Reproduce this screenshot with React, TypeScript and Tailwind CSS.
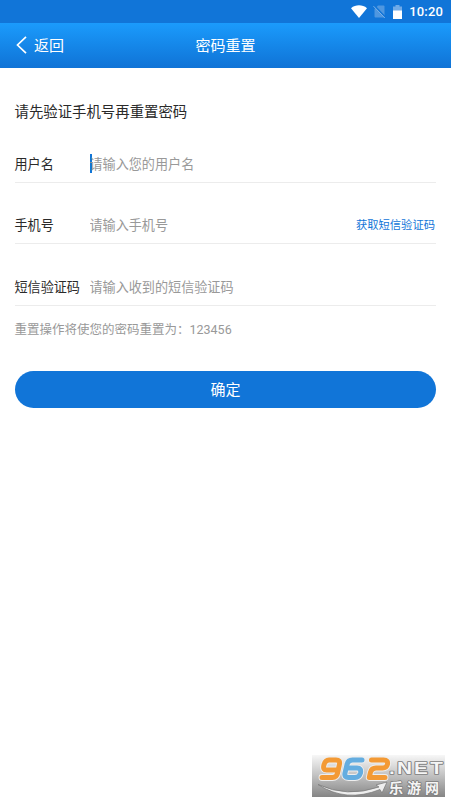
import React, { useState } from "react";

const fields = [
  { id: "username", label: "用户名", placeholder: "请输入您的用户名" },
  { id: "phone", label: "手机号", placeholder: "请输入手机号", action: "获取短信验证码" },
  { id: "code", label: "短信验证码", placeholder: "请输入收到的短信验证码" },
];

function StatusBar() {
  return (
    <div className="flex h-[23px] items-center justify-end bg-[#1175d8] pr-[8px] text-white">
      <svg className="h-[13px] w-[16px]" viewBox="0 0 16 13" fill="currentColor">
        <path d="M0 3.2C4.6-.6 11.4-.6 16 3.2L8 13Z" />
      </svg>
      <svg className="ml-[6px] h-[13px] w-[13px]" viewBox="0 0 13 13">
        <path d="M5 0.5H10.5Q11.5 .5 11.5 1.5V12.5H2.5Q1.5 12.5 1.5 11.5V4Z" fill="#4f97e0" />
        <path d="M1.2 .8L12.5 12.6" stroke="#1175d8" strokeWidth="2" />
        <path d="M.5 1.2L11.8 13" stroke="#7fb3e8" strokeWidth="1" />
      </svg>
      <svg className="ml-[7px] h-[14px] w-[9px]" viewBox="0 0 9 14">
        <path d="M2.5 0H6.5V1.5H9V14H0V1.5H2.5Z" fill="#70aae7" />
        <path d="M0 5.5H9V14H0Z" fill="#fff" />
      </svg>
      <span className="ml-[7px] font-['Roboto'] text-[13px] leading-none font-medium tracking-[0.15px]">10:20</span>
    </div>
  );
}

const digits = [
  { color: "#f39a35", d: "M25.5 15H14.5Q10.8 15 11.8 10.5Q13 5 17 5H24Q28.5 5 27.4 9.5L25.6 18Q24.6 22.5 20.5 22.5H10" },
  { color: "#64ade0", d: "M50 5H40.5Q36 5 35 9.5L33 18Q32 22.5 36.5 22.5H43Q47.4 22.5 48.5 18Q49.5 13 45 13H35" },
  { color: "#f39a35", d: "M59.5 5H71.5Q76.5 5 75.4 9.5Q74.6 13 70.5 13H64Q59.5 13 58.4 17.5L57.3 22.5H73" },
];

function SiteBadge() {
  return (
    <svg className="absolute top-[755px] left-[312px] h-[42px] w-[133px]" viewBox="0 0 133 42">
      <defs>
        <linearGradient id="badge" x1="0" y1="0" x2="0" y2="1">
          <stop offset="0" stopColor="#f7f7f7" />
          <stop offset=".45" stopColor="#c6c6c6" />
          <stop offset="1" stopColor="#858585" />
        </linearGradient>
      </defs>
      <rect width="133" height="42" fill="url(#badge)" />
      {digits.map((digit) => (
        <g key={digit.d} fill="none" strokeLinejoin="round" strokeLinecap="round">
          <path d={digit.d} stroke="#eee" strokeWidth="6.8" />
          <path d={digit.d} stroke={digit.color} strokeWidth="5" />
        </g>
      ))}
      <path d="M6 29.5Q35 43 67 32L64 30L75 27L70 38L68 34.5Q34 48 6 29.5Z" fill="#eee" stroke="#777" strokeWidth=".7" />
      <g fill="#f5f5f5" stroke="#7d7d7d" strokeWidth="1.6" paintOrder="stroke" strokeLinejoin="round">
        <text transform="translate(77 19) scale(1.22 1)" letterSpacing="1.8" fontFamily="Liberation Sans, sans-serif" fontSize="17" fontWeight="700">.NET</text>
        <text x="77" y="37.5" textLength="50" fontFamily="Noto Sans CJK SC, sans-serif" fontSize="14" fontWeight="700">乐游网</text>
      </g>
    </svg>
  );
}

export default function App() {
  const [values, setValues] = useState<Record<string, string>>({});

  return (
    <div className="relative h-[803px] w-[451px] overflow-hidden bg-white font-['Roboto','Noto_Sans_CJK_SC',sans-serif] text-[#333]">
      <StatusBar />

      {/* Header */}
      <header className="grid h-[45px] grid-cols-3 items-center bg-linear-to-b from-[#1b9bfc] to-[#1073d6] text-[15px] text-white">
        <button className="flex items-center pt-px pl-[16px]">
          <svg className="-mt-[2px] h-[18px] w-[11px]" viewBox="0 0 11 18" fill="none" stroke="currentColor" strokeWidth="1.7">
            <path d="M10 .8L1.5 9L10 17.2" />
          </svg>
          <span className="ml-[7px]">返回</span>
        </button>
        <h1 className="pt-px text-center">密码重置</h1>
      </header>

      <main className="pt-[33px] pr-[15px] pl-[14.5px]">
        <h2 className="h-[24px] text-[14.4px] leading-[24px] text-[#2a2a2a]">请先验证手机号再重置密码</h2>

        {/* Form fields */}
        <div className="mt-[20px] flex flex-col gap-[23.3px] text-[13.1px]">
          {fields.map((field) => (
            <label key={field.id} className="flex h-[38px] items-center border-b border-[#ececec] pt-[3px]">
              <span className="w-[75px] shrink-0 whitespace-nowrap text-[#2a2a2a]">{field.label}</span>
              {field.id === "username" && <span className="-mt-[3px] -mr-[2px] h-[19px] w-[2px] bg-[#1175d8]" />}
              <input
                className="w-0 flex-1 bg-transparent outline-none placeholder:text-[#999]"
                placeholder={field.placeholder}
                value={values[field.id] || ""}
                onChange={(e) => setValues({ ...values, [field.id]: e.target.value })}
              />
              {field.action && <button className="mr-px text-[11.3px] text-[#1175d8]">{field.action}</button>}
            </label>
          ))}
        </div>

        <p className="mt-[14px] h-[20px] text-[12.5px] leading-[20px] text-[#999]">重置操作将使您的密码重置为：123456</p>

        <button className="mt-[31.5px] ml-[.5px] h-[36.5px] w-[421px] rounded-full bg-[#1175d8] pt-[2px] text-[15px] text-white">确定</button>
      </main>

      <SiteBadge />
    </div>
  );
}
